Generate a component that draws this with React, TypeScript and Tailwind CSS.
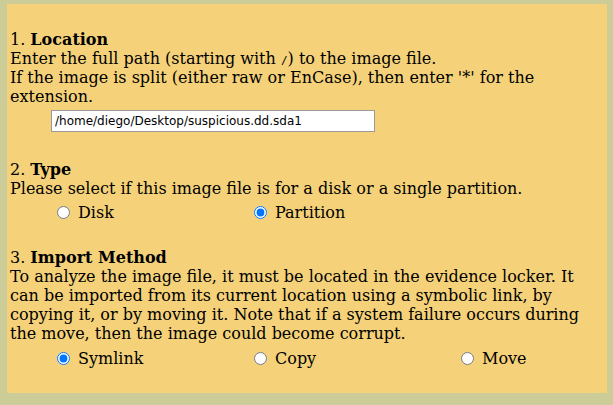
const serif = { fontFamily: '"DejaVu Serif", "Liberation Serif", serif' };

type Option = { label: string; checked?: boolean; width: number };

const RadioRow = ({ name, options, height }: { name: string; options: Option[]; height: string }) => {
  return (
    <div className={`flex items-center pl-[47px] ${height}`}>
      {options.map((opt) => (
        <label key={opt.label} className="flex items-center" style={{ width: opt.width }}>
          <input
            type="radio"
            name={name}
            defaultChecked={opt.checked}
            className="m-0 mr-[8px] w-[13px] h-[13px]"
          />
          <span>{opt.label}</span>
        </label>
      ))}
    </div>
  );
};

const App = () => {
  return (
    <div className="w-[613px] h-[405px] bg-[#cccc99] pt-[4px] pl-[7px] overflow-hidden">
      <div
        className="w-[600px] h-[389px] bg-[#f5d27a] px-[3px] pt-[26px] text-[16px] leading-[19px] text-black"
        style={serif}
      >
        <div>
          1. <b>Location</b>
        </div>
        <div>
          Enter the full path (starting with{" "}
          <span className="text-[11px] leading-[0]" style={{ fontFamily: '"DejaVu Sans Mono", monospace' }}>/</span>) to the
          image file.
        </div>
        <div>If the image is split (either raw or EnCase), then enter '*' for the extension.</div>
        <input
          type="text"
          defaultValue="/home/diego/Desktop/suspicious.dd.sda1"
          className="block mt-[4px] ml-[41px] w-[324px] h-[22px] border border-[#9a9a9a] bg-white px-[3px] text-[12px] text-black"
          style={{ fontFamily: '"DejaVu Sans", sans-serif' }}
        />

        <div className="mt-[28px]">
          2. <b>Type</b>
        </div>
        <div>Please select if this image file is for a disk or a single partition.</div>
        <RadioRow
          name="type"
          height="h-[28px]"
          options={[
            { label: "Disk", width: 197 },
            { label: "Partition", checked: true, width: 207 },
          ]}
        />

        <div className="mt-[22px]">
          3. <b>Import Method</b>
        </div>
        <div>
          To analyze the image file, it must be located in the evidence locker. It can be imported from its
          current location using a symbolic link, by copying it, or by moving it. Note that if a system failure
          occurs during the move, then the image could become corrupt.
        </div>
        <RadioRow
          name="method"
          height="h-[30px]"
          options={[
            { label: "Symlink", checked: true, width: 197 },
            { label: "Copy", width: 207 },
            { label: "Move", width: 100 },
          ]}
        />
      </div>
    </div>
  );
};

export default App;
